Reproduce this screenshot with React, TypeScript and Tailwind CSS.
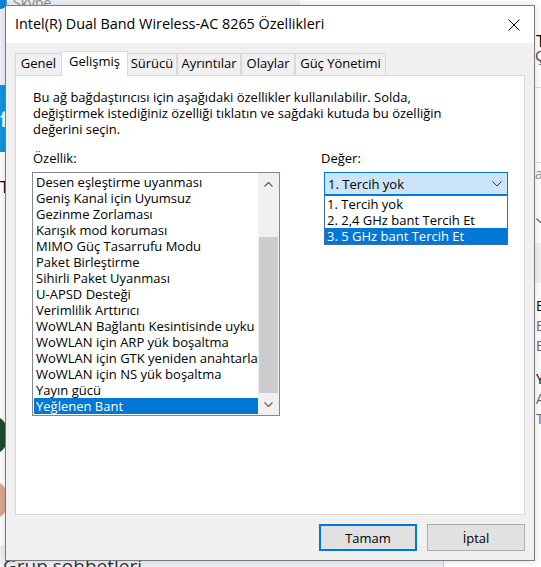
import React from "react";

const items = [
  "Desen eşleştirme uyanması",
  "Geniş Kanal için Uyumsuz",
  "Gezinme Zorlaması",
  "Karışık mod koruması",
  "MIMO Güç Tasarrufu Modu",
  "Paket Birleştirme",
  "Sihirli Paket Uyanması",
  "U-APSD Desteği",
  "Verimlilik Arttırıcı",
  "WoWLAN Bağlantı Kesintisinde uyku",
  "WoWLAN için ARP yük boşaltma",
  "WoWLAN için GTK yeniden anahtarlama",
  "WoWLAN için NS yük boşaltma",
  "Yayın gücü",
  "Yeğlenen Bant",
];

const tabs = [
  { label: "Genel", w: "w-[47px]" },
  { label: "Gelişmiş", w: "w-[67px]", active: true },
  { label: "Sürücü", w: "w-[50px]" },
  { label: "Ayrıntılar", w: "w-[64px]" },
  { label: "Olaylar", w: "w-[54px]" },
  { label: "Güç Yönetimi", w: "w-[91px]" },
];

function Chevron({ up }: { up?: boolean }) {
  return (
    <svg width="9" height="5" viewBox="0 0 9 5" className="block">
      <polyline
        points={up ? "0.5,4.5 4.5,0.5 8.5,4.5" : "0.5,0.5 4.5,4.5 8.5,0.5"}
        fill="none"
        stroke="#606060"
        strokeWidth="1.2"
      />
    </svg>
  );
}

function Background() {
  return (
    <div className="absolute inset-0 bg-white">
      {/* Skype header */}
      <div className="absolute left-0 top-0 w-[300px] h-[85px] bg-[#eef2f6]">
        <div className="flex items-center gap-[6px] -mt-[8px] pl-0">
          <div className="w-[13px] h-[13px] rounded-full bg-[#0a84d6] -ml-[6px]" />
          <span className="text-[14px] text-[#8a8a8a]">Skype</span>
        </div>
      </div>
      <div className="absolute left-0 top-[85px] w-[300px] h-[67px] bg-[#1296e0]">
        <span className="absolute left-[0px] top-[22px] text-[22px] font-bold text-white leading-none">f</span>
      </div>
      <div className="absolute left-0 top-[178px] text-[17px] text-black leading-none">Tümü</div>
      <div className="absolute -left-[28px] top-[415px] w-[36px] h-[40px] rounded-full bg-[#1f4a2a]" />
      <div className="absolute -left-[28px] top-[480px] w-[36px] h-[40px] rounded-full bg-[#d8a894]" />
      <div className="absolute left-0 top-[545px] w-[444px] h-[22px] bg-[#eef1f6] border-r border-[#c8c8c8]">
        <div className="absolute left-[3px] top-[12px] text-[19px] leading-none text-[#333]">
          Grup sohbetleri
        </div>
      </div>
      {/* right side fragments */}
      <div className="absolute left-[536px] top-[32px] text-[17px] leading-none text-black">Tercihler</div>
      <div className="absolute left-[535px] top-[48px] text-[15px] leading-none text-[#444]">Çevrimiçi</div>
      <div className="absolute left-[534px] top-[87px] w-[10px] h-px bg-[#dddddd]" />
      <div className="absolute left-[534px] top-[162px] w-[10px] h-px bg-[#dddddd]" />
      <div className="absolute left-[535px] top-[167px] text-[14px] leading-none text-[#999]">ara</div>
      <div className="absolute left-[536px] top-[218px]">
        <Chevron />
      </div>
      <div className="absolute left-[534px] top-[243px] w-[10px] h-[40px] bg-[#f2f2f2]" />
      <div className="absolute left-[536px] top-[299px] text-[14px] leading-none text-black">Bildirim</div>
      <div className="absolute left-[536px] top-[319px] text-[14px] leading-none text-[#666]">Bilgi</div>
      <div className="absolute left-[536px] top-[339px] text-[14px] leading-none text-[#666]">Bağlan</div>
      <div className="absolute left-[536px] top-[372px] text-[14px] leading-none text-black">Yardım</div>
      <div className="absolute left-[536px] top-[392px] text-[14px] leading-none text-[#666]">Ayarlar</div>
      <div className="absolute left-[536px] top-[412px] text-[14px] leading-none text-[#666]">Tema</div>
    </div>
  );
}

export default function App() {
  return (
    <div className="relative w-[541px] h-[567px] overflow-hidden font-['Open_Sans',sans-serif] text-black">
      <Background />
      <div className="absolute left-[5px] top-[5px] w-[530px] h-[556px] border border-[#7a7a7a] bg-[#f0f0f0] flex flex-col shadow-[0_0_8px_rgba(0,0,0,0.15)]">
        {/* Title bar */}
        <div className="h-[37px] bg-white flex items-center justify-between pl-[9px] pr-[14px] shrink-0">
          <span className="text-[14.4px] leading-none whitespace-nowrap">
            Intel(R) Dual Band Wireless-AC 8265 Özellikleri
          </span>
          <svg width="12" height="12" viewBox="0 0 12 12">
            <path d="M0.5 0.5 L11.5 11.5 M11.5 0.5 L0.5 11.5" stroke="#000" strokeWidth="1" fill="none" />
          </svg>
        </div>

        {/* Body */}
        <div className="flex-1 flex flex-col px-[9px] pt-[8px] text-[13px] leading-[16px]">
          {/* Tabs */}
          <div className="flex items-end h-[24px] shrink-0 relative z-10">
            {tabs.map((t) =>
              t.active ? (
                <div
                  key={t.label}
                  className={`${t.w} h-[25px] -mb-px pt-px bg-white border border-b-0 border-[#d9d9d9] flex justify-center whitespace-nowrap -mx-px relative z-10`}
                >
                  {t.label}
                </div>
              ) : (
                <div
                  key={t.label}
                  className={`${t.w} h-[22px] pt-px bg-[#f0f0f0] border border-b-0 border-[#d9d9d9] flex justify-center whitespace-nowrap`}
                >
                  {t.label}
                </div>
              )
            )}
          </div>

          {/* Panel */}
          <div className="h-[440px] bg-white border border-[#d9d9d9] pl-[16px] pt-[13px] shrink-0">
            <p className="ml-px whitespace-nowrap">
              Bu ağ bağdaştırıcısı için aşağıdaki özellikler kullanılabilir. Solda,
              <br />
              değiştirmek istediğiniz özelliği tıklatın ve sağdaki kutuda bu özelliğin
              <br />
              değerini seçin.
            </p>
            <div className="flex mt-[13px]">
              {/* Left column */}
              <div className="w-[248px] flex flex-col">
                <div className="ml-px">Özellik:</div>
                <div className="mt-[6px] h-[244px] border border-[#828790] flex">
                  <div className="flex-1 pl-px py-px overflow-hidden">
                    {items.map((it, i) => {
                      const sel = i === items.length - 1;
                      return (
                        <div
                          key={it}
                          className={`h-[16px] pl-[2px] whitespace-nowrap overflow-hidden ${
                            sel ? "bg-[#0078d7] text-white" : ""
                          }`}
                        >
                          {it}
                        </div>
                      );
                    })}
                  </div>
                  <div className="w-[21px] bg-[#f0f0f0] flex flex-col">
                    <div className="h-[22px] flex items-center justify-center">
                      <Chevron up />
                    </div>
                    <div className="h-[42px]" />
                    <div className="h-[156px] mx-px bg-[#cdcdcd]" />
                    <div className="h-[22px] flex items-center justify-center">
                      <Chevron />
                    </div>
                  </div>
                </div>
              </div>

              {/* Right column */}
              <div className="ml-[41px] flex flex-col">
                <div>Değer:</div>
                <div className="relative ml-[3px] mt-[6px] w-[184px]">
                  <div className="h-[23px] border border-[#0078d7] bg-[#cce4f7] flex items-center justify-between pl-[3px] pr-[5px]">
                    <span>1. Tercih yok</span>
                    <svg width="10" height="6" viewBox="0 0 10 6">
                      <polyline points="0.5,0.5 5,5 9.5,0.5" fill="none" stroke="#333" strokeWidth="1" />
                    </svg>
                  </div>
                  <div className="absolute left-0 top-full w-[184px] border border-[#3c6ea8] bg-white">
                    <div className="h-[16px] pl-[2px]">1. Tercih yok</div>
                    <div className="h-[16px] pl-[2px]">2. 2,4 GHz bant Tercih Et</div>
                    <div className="h-[16px] pl-[2px] bg-[#0078d7] text-white">3. 5 GHz bant Tercih Et</div>
                  </div>
                </div>
              </div>
            </div>
          </div>

          {/* Buttons */}
          <div className="flex justify-end gap-[10px] mt-[9px]">
            <button className="w-[98px] h-[27px] border-2 border-[#0078d7] bg-[#e1e1e1] flex items-center justify-center">
              Tamam
            </button>
            <button className="w-[98px] h-[27px] border border-[#adadad] bg-[#e1e1e1] flex items-center justify-center">
              İptal
            </button>
          </div>
        </div>
      </div>
    </div>
  );
}
